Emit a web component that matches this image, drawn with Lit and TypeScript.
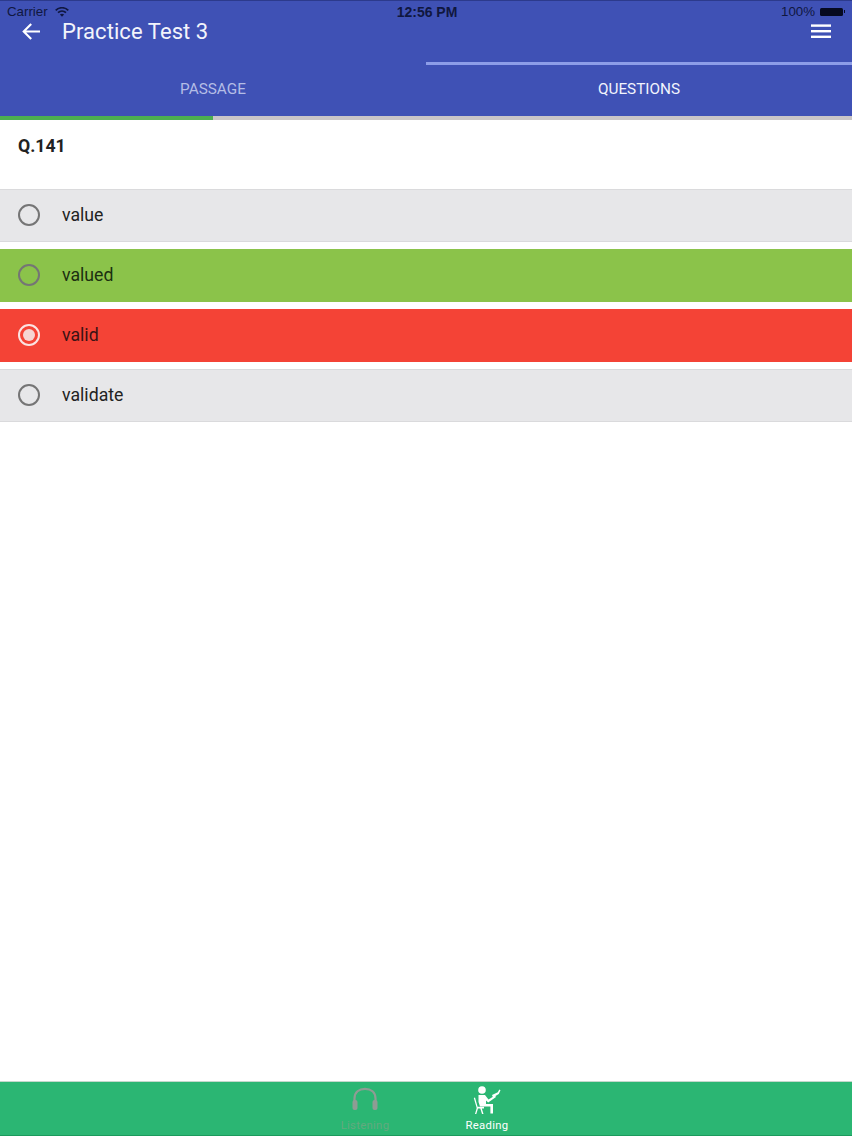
import { LitElement, html, css, svg } from "lit";
import { customElement } from "lit/decorators.js";

type Opt = { label: string; kind: string; selected?: boolean };
const OPTIONS: Opt[] = [
  { label: "value", kind: "plain" },
  { label: "valued", kind: "right" },
  { label: "valid", kind: "wrong", selected: true },
  { label: "validate", kind: "plain" },
];

@customElement("app-root")
export class AppRoot extends LitElement {
  static styles = css`
    :host {
      display: flex;
      flex-direction: column;
      width: 852px;
      height: 1136px;
      background: #fff;
      font-family: Roboto, "Liberation Sans", sans-serif;
      overflow: hidden;
    }
    .header {
      background: #3f51b5;
      border-top: 1px solid #2c3a8c;
      height: 115px;
      display: flex;
      flex-direction: column;
      flex: none;
    }
    .status {
      height: 19px;
      box-sizing: border-box;
      padding: 2px 7px 0 7px;
      display: grid;
      grid-template-columns: 1fr auto 1fr;
      align-items: center;
      font-family: "Liberation Sans", Arial, sans-serif;
      font-size: 13.3px;
      color: #10173f;
      flex: none;
    }
    .status .left { display: flex; align-items: center; gap: 7px; }
    .status .time { font-weight: 700; font-size: 14px; margin-left: 2px; }
    .status .right { display: flex; align-items: center; justify-content: flex-end; gap: 5px; }
    .battery { width: 23px; height: 8px; background: #060a20; border-radius: 1.5px; margin-right: 2px; position: relative; }
    .battery::after { content: ""; position: absolute; right: -2px; top: 2.5px; width: 1.5px; height: 3px; background: #060a20; }
    .toolbar {
      height: 22px;
      display: flex;
      align-items: center;
      padding: 0 21px 0 22px;
      color: #fff;
      flex: none;
    }
    .toolbar .title { font-size: 22px; margin-left: 22px; flex: 1; letter-spacing: 0.07px; color: #f3f4fb; }
    .tabs {
      margin-top: 20px;
      flex: 1;
      display: grid;
      grid-template-columns: 1fr 1fr;
    }
    .tab {
      border-top: 3px solid transparent;
      display: flex;
      justify-content: center;
      padding-top: 15px;
      font-size: 15.3px;
      line-height: 18px;
      color: #b4bde6;
    }
    .tab.active { border-top-color: #8d9de8; color: #f2f4fd; }
    .progress { height: 4px; flex: none; background: #c9c5c8; }
    .progress .fill { height: 100%; background: #4caf50; }
    .question {
      height: 69px;
      flex: none;
      box-sizing: border-box;
      padding: 16px 18px 0;
      font-weight: 700;
      font-size: 17.7px;
      line-height: 20px;
      color: #222;
    }
    .options { display: flex; flex-direction: column; gap: 7px; flex: none; }
    .opt {
      height: 53px;
      box-sizing: border-box;
      display: flex;
      align-items: center;
      gap: 22px;
      padding: 0 0 1px 18px;
      font-size: 17.7px;
      color: #222;
    }
    .opt.plain { background: #e7e7e9; border-top: 1px solid #dadadc; border-bottom: 1px solid #dadadc; padding-bottom: 1px; }
    .opt.right { background: #8bc34a; color: #1c3010; }
    .opt.wrong { background: #f44336; color: #3a1214; }
    .radio {
      width: 22px;
      height: 22px;
      box-sizing: border-box;
      border-radius: 50%;
      border: 2px solid #757575;
      display: flex;
      align-items: center;
      justify-content: center;
      flex: none;
    }
    .radio.on { border-color: #fbe3e2; }
    .radio.on::after { content: ""; width: 12px; height: 12px; border-radius: 50%; background: #f6d5d3; }
    .spacer { flex: 1; }
    .footer {
      height: 55px;
      flex: none;
      box-sizing: border-box;
      background: #2bb673;
      border-top: 1px solid #c4d8cc;
      border-bottom: 1px solid #1b9a5c;
      display: flex;
      justify-content: center;
      gap: 49px;
    }
    .item {
      width: 73px;
      display: flex;
      flex-direction: column;
      align-items: center;
      font-size: 11.3px;
      letter-spacing: 0.3px;
      color: #fff;
      padding-top: 2px;
      height: 100%;
      box-sizing: border-box;
    }
    .item svg { display: block; height: 32px; }
    .item span { line-height: 13px; margin-top: 3px; }
    .item.off { color: #62a97f; }
  `;

  private arrow() {
    return svg`<svg width="18" height="17" viewBox="0 0 18 17" fill="none" stroke="#fff" stroke-width="2.1" style="flex:none"><path d="M18 8.5H2M9.2 1 1.7 8.5 9.2 16"/></svg>`;
  }
  private menu() {
    return svg`<svg width="20" height="14" viewBox="0 0 20 14" fill="#fff" style="display:block"><rect y="0.4" width="20" height="2.4"/><rect y="6" width="20" height="2.4"/><rect y="11.6" width="20" height="2.4"/></svg>`;
  }
  private wifi() {
    return svg`<svg width="14" height="10" viewBox="0 0 14 10" fill="none" stroke="#10173f" stroke-width="1.7"><path d="M.7 3.3C4.2-.1 9.8-.1 13.3 3.3M3 5.7c2.3-2.1 5.700-2.100 8 0"/><path d="M4.900 7.400 7 9.800l2.100-2.400c-1.200-1-3-1-4.200 0z" fill="#10173f" stroke="none"/></svg>`;
  }
  private headphones() {
    return svg`<svg width="28" height="32" viewBox="0 0 28 32" fill="none"><path d="M3.500 18v-3.500C3.500 8 8 4.800 14 4.800s10.500 3.200 10.500 9.700V18" stroke="#8f9c94" stroke-width="2.200"/><rect x="1.500" y="16" width="5" height="10" rx="2" fill="#8f9c94"/><rect x="21.500" y="16" width="5" height="10" rx="2" fill="#8f9c94"/></svg>`;
  }
  private reader() {
    return svg`<svg width="30" height="32" viewBox="0 0 30 32" fill="#fff"><circle cx="10" cy="6" r="3.800"/><path d="M6.500 11h6.500l3.500 4.500 6.500-4 1 1.600-7.800 5.400-2.200-2V20h7v9.500h-2.600V22.600H8L6.500 18z"/><path d="M3 13.500 5.600 22.800H12V24.600H9.800L11.500 30H10L8.300 24.600H6L4.300 30H3L4.700 24 1.800 14z"/><path d="M20 11 25.800 8.300 27.300 5.500 28.500 6.200 26.800 10 21 13.500z"/></svg>`;
  }

  render() {
    return html`
      <div class="header">
        <div class="status">
          <div class="left"><span>Carrier</span>${this.wifi()}</div>
          <div class="time">12:56 PM</div>
          <div class="right"><span>100%</span><div class="battery"></div></div>
        </div>
        <div class="toolbar">
          ${this.arrow()}
          <div class="title">Practice Test 3</div>
          ${this.menu()}
        </div>
        <div class="tabs">
          <div class="tab">PASSAGE</div>
          <div class="tab active">QUESTIONS</div>
        </div>
      </div>
      <div class="progress"><div class="fill" style="width:25%"></div></div>
      <div class="question">Q.141</div>
      <div class="options">
        ${OPTIONS.map(
          (o) => html`<div class="opt ${o.kind}">
            <div class="radio ${o.selected ? "on" : ""}"></div>
            <span>${o.label}</span>
          </div>`
        )}
      </div>
      <div class="spacer"></div>
      <div class="footer">
        <div class="item off">${this.headphones()}<span>Listening</span></div>
        <div class="item">${this.reader()}<span>Reading</span></div>
      </div>
    `;
  }
}
